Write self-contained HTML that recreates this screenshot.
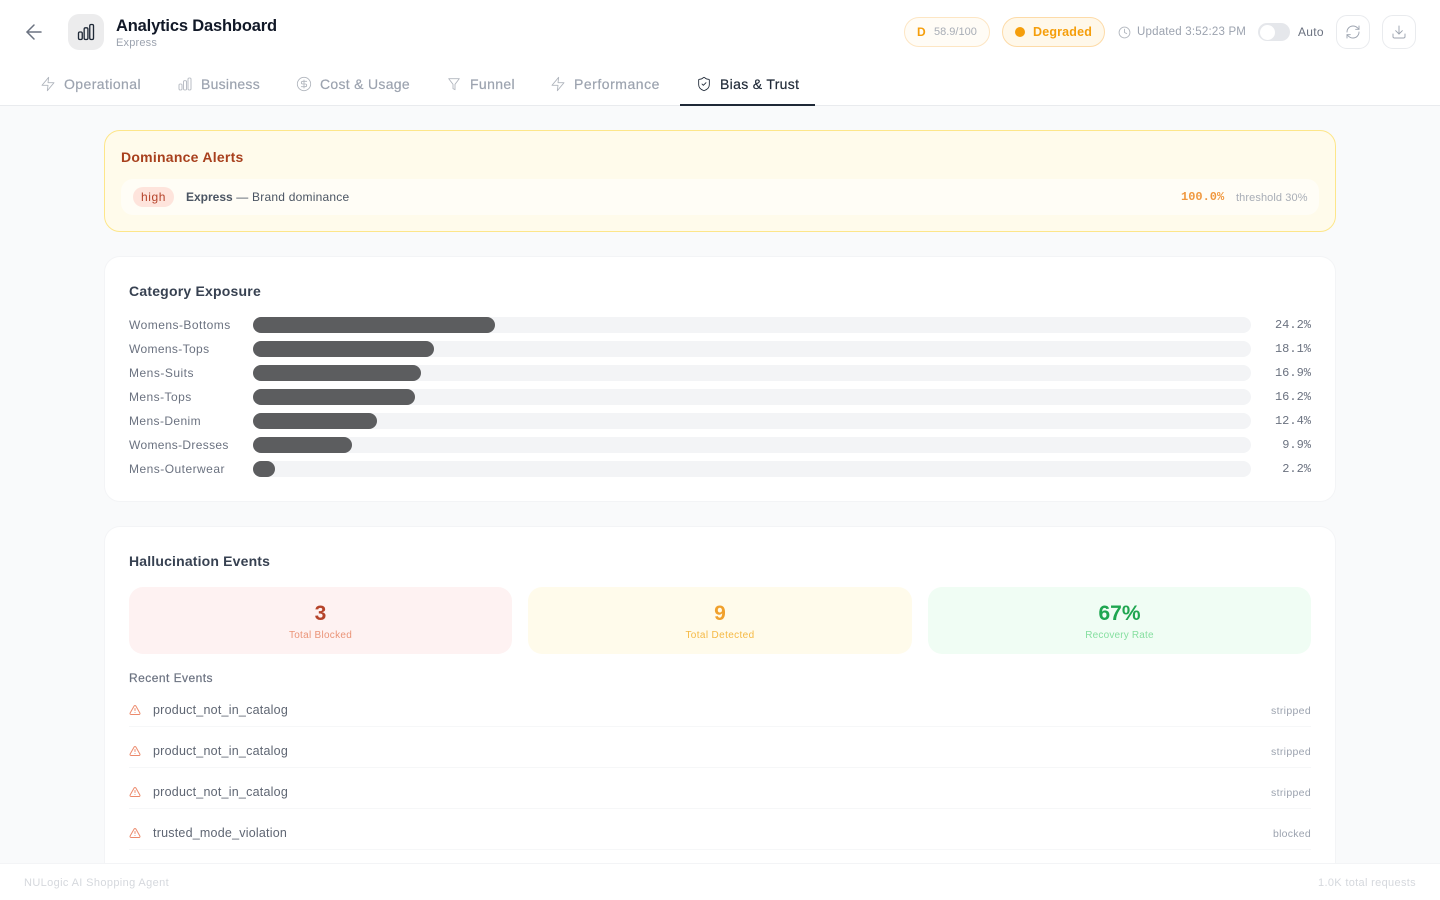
<!DOCTYPE html>
<html lang="en">
<head>
<meta charset="utf-8">
<title>Analytics Dashboard</title>
<style>
html,body{margin:0;padding:0;width:1440px;height:900px;overflow:hidden;background:#f9fafb;font-family:"Liberation Sans",sans-serif}
*{box-sizing:border-box}
.a{position:absolute}
.t{position:absolute;white-space:nowrap;line-height:20px;height:20px}
.m{-webkit-text-stroke:.2px currentColor}
.mono{font-family:"Liberation Mono",monospace}
svg{position:absolute;fill:none;stroke-linecap:round;stroke-linejoin:round}
.tab{font-size:14px;color:#9ca3af;top:74px}
.ti{width:16px;height:16px;top:76px;stroke:#b0b5bd;stroke-width:1.3}
.lab{font-size:12px;color:#6b7280;left:129px}
.track{position:absolute;left:253px;width:998px;height:16px;background:#f3f4f6;border-radius:8px}
.fill{position:absolute;left:0;top:0;height:16px;background:#5c5d5f;border-radius:8px}
.pct{font-size:12px;color:#6b7280;right:129px}
.stat{position:absolute;top:587px;height:67px;border-radius:14px}
.ev{font-size:12.5px;color:#5f6673;left:153px}
.st{font-size:10.5px;color:#9ca3af;right:129px}
.sep{position:absolute;left:129px;width:1182px;height:1px;background:#f6f7f8}
.warn{left:129px;width:12px;height:12px;stroke:#ec8a6c;stroke-width:2}
.ib{position:absolute;top:15px;width:34px;height:34px;background:#fff;border:1px solid #e9ebee;border-radius:11px}
</style>
</head>
<body>

<header class="a" style="left:0;top:0;width:1440px;height:106px;background:#fff;border-bottom:1px solid #e9ebee"></header>

<svg style="left:22px;top:20px;stroke:#6b7280;stroke-width:1.5" width="24" height="24" viewBox="0 0 24 24"><path d="m12 19-7-7 7-7"/><path d="M19 12H5"/></svg>

<div class="a" style="left:68px;top:14px;width:36px;height:36px;background:#ececed;border-radius:11px"></div>
<svg style="left:76px;top:22px;stroke:#1f2937;stroke-width:1.6" width="20" height="20" viewBox="0 0 24 24"><rect x="3" y="12" width="4.5" height="9" rx="1.6"/><rect x="9.8" y="7" width="4.5" height="14" rx="1.6"/><rect x="16.5" y="3" width="4.5" height="18" rx="1.6"/></svg>

<div class="t" style="left:116px;top:16px;font-size:16.5px;font-weight:700;color:#111827;letter-spacing:-.17px">Analytics Dashboard</div>
<div class="t" style="left:116px;top:33px;font-size:11px;color:#9ca3af;letter-spacing:.18px">Express</div>

<div class="a" style="left:904px;top:17px;width:86px;height:30px;border:1px solid #fde6c4;border-radius:15px;background:#fffcf6"></div>
<div class="t" style="left:917px;top:22px;font-size:12px;font-weight:700;color:#f59e0b">D</div>
<div class="t" style="left:934px;top:22px;font-size:11px;color:#a8adb6">58.9/100</div>

<div class="a" style="left:1002px;top:17px;width:103px;height:30px;border:1px solid #fddba8;border-radius:15px;background:#fff8ea"></div>
<div class="a" style="left:1015px;top:27px;width:10px;height:10px;border-radius:50%;background:#f59e0b"></div>
<div class="t" style="left:1033px;top:22px;font-size:12.5px;font-weight:700;color:#f59e0b;letter-spacing:.17px">Degraded</div>

<svg style="left:1117.5px;top:25.5px;stroke:#b4b9c1;stroke-width:1.7" width="13" height="13" viewBox="0 0 24 24"><circle cx="12" cy="12" r="10"/><polyline points="12 6 12 12 16 14"/></svg>
<div class="t" style="left:1137px;top:22px;font-size:11.5px;color:#9ca3af;letter-spacing:.2px">Updated 3:52:23 PM</div>

<div class="a" style="left:1258px;top:23px;width:32px;height:18px;border-radius:9px;background:#e5e7eb"></div>
<div class="a" style="left:1259.5px;top:24.5px;width:15px;height:15px;border-radius:50%;background:#fff"></div>
<div class="t" style="left:1298px;top:22px;font-size:12px;color:#6b7280;letter-spacing:.3px">Auto</div>

<div class="ib" style="left:1336px"></div>
<svg style="left:1345px;top:24px;stroke:#9ca3af;stroke-width:1.4" width="16" height="16" viewBox="0 0 24 24"><path d="M3 12a9 9 0 0 1 9-9 9.75 9.75 0 0 1 6.74 2.74L21 8"/><path d="M21 3v5h-5"/><path d="M21 12a9 9 0 0 1-9 9 9.75 9.75 0 0 1-6.74-2.74L3 16"/><path d="M8 16H3v5"/></svg>
<div class="ib" style="left:1382px"></div>
<svg style="left:1391px;top:24px;stroke:#9ca3af;stroke-width:1.4" width="16" height="16" viewBox="0 0 24 24"><path d="M21 15v4a2 2 0 0 1-2 2H5a2 2 0 0 1-2-2v-4"/><polyline points="7 10 12 15 17 10"/><line x1="12" y1="15" x2="12" y2="3"/></svg>

<svg class="ti" style="left:40px" viewBox="0 0 24 24"><polygon points="13 2 3 14 12 14 11 22 21 10 12 10 13 2"/></svg>
<div class="t tab m" style="left:64px;letter-spacing:.42px">Operational</div>
<svg class="ti" style="left:177px" viewBox="0 0 24 24"><rect x="3" y="12" width="4.5" height="9" rx="1.6"/><rect x="9.8" y="7" width="4.5" height="14" rx="1.6"/><rect x="16.5" y="3" width="4.5" height="18" rx="1.6"/></svg>
<div class="t tab m" style="left:201px;letter-spacing:.27px">Business</div>
<svg class="ti" style="left:296px" viewBox="0 0 24 24"><circle cx="12" cy="12" r="10"/><path d="M16 8h-6a2 2 0 1 0 0 4h4a2 2 0 1 1 0 4H8"/><path d="M12 18V6"/></svg>
<div class="t tab m" style="left:320px;letter-spacing:.3px">Cost &amp; Usage</div>
<svg class="ti" style="left:446px" viewBox="0 0 24 24"><polygon points="20 4 4 4 10.5 12.46 10.5 19 13.5 20.5 13.5 12.46 20 4"/></svg>
<div class="t tab m" style="left:470px;letter-spacing:.37px">Funnel</div>
<svg class="ti" style="left:550px" viewBox="0 0 24 24"><polygon points="13 2 3 14 12 14 11 22 21 10 12 10 13 2"/></svg>
<div class="t tab m" style="left:574px;letter-spacing:.53px">Performance</div>
<svg class="ti" style="left:696px;stroke:#1f2937" viewBox="0 0 24 24"><path d="M20 13c0 5-3.5 7.5-7.66 8.95a1 1 0 0 1-.67-.01C7.5 20.5 4 18 4 13V6a1 1 0 0 1 1-1c2 0 4.5-1.2 6.24-2.72a1.17 1.17 0 0 1 1.52 0C14.51 3.81 17 5 19 5a1 1 0 0 1 1 1z"/><path d="m9 12 2 2 4-4"/></svg>
<div class="t tab m" style="left:720px;color:#1f2937;letter-spacing:.32px">Bias &amp; Trust</div>
<div class="a" style="left:680px;top:104px;width:135px;height:2px;background:#1f2937"></div>

<section class="a" style="left:104px;top:130px;width:1232px;height:102px;background:#fffbeb;border:1px solid #fde68a;border-radius:16px"></section>
<div class="t" style="left:121px;top:147px;font-size:14px;font-weight:700;color:#a8401d;letter-spacing:.25px">Dominance Alerts</div>
<div class="a" style="left:121px;top:179px;width:1198px;height:36px;background:#fffdf6;border-radius:12px"></div>
<div class="a" style="left:133px;top:187px;width:41px;height:20px;background:#fee4dc;border-radius:10px"></div>
<div class="t" style="left:141px;top:187px;font-size:12px;color:#b5432a;letter-spacing:.58px">high</div>
<div class="t" style="left:186px;top:187px;font-size:12px;color:#4b5563;letter-spacing:.22px"><span style="font-weight:700;letter-spacing:0">Express</span> — Brand dominance</div>
<div class="t mono" style="left:1181px;top:187px;font-size:12px;font-weight:700;color:#f0983f">100.0%</div>
<div class="t" style="left:1236px;top:188px;font-size:11px;color:#a8adb6;letter-spacing:.1px">threshold 30%</div>

<section class="a" style="left:104px;top:256px;width:1232px;height:246px;background:#fff;border:1px solid #f3f4f6;border-radius:16px"></section>
<div class="t" style="left:129px;top:281px;font-size:14px;font-weight:700;color:#374151;letter-spacing:.21px">Category Exposure</div>

<div class="t lab" style="top:315px;letter-spacing:.47px">Womens-Bottoms</div>
<div class="track" style="top:317px"><div class="fill" style="width:242px"></div></div>
<div class="t pct mono" style="top:315px">24.2%</div>

<div class="t lab" style="top:339px;letter-spacing:.36px">Womens-Tops</div>
<div class="track" style="top:341px"><div class="fill" style="width:181px"></div></div>
<div class="t pct mono" style="top:339px">18.1%</div>

<div class="t lab" style="top:363px;letter-spacing:.5px">Mens-Suits</div>
<div class="track" style="top:365px"><div class="fill" style="width:168px"></div></div>
<div class="t pct mono" style="top:363px">16.9%</div>

<div class="t lab" style="top:387px;letter-spacing:.44px">Mens-Tops</div>
<div class="track" style="top:389px"><div class="fill" style="width:162px"></div></div>
<div class="t pct mono" style="top:387px">16.2%</div>

<div class="t lab" style="top:411px;letter-spacing:.4px">Mens-Denim</div>
<div class="track" style="top:413px"><div class="fill" style="width:124px"></div></div>
<div class="t pct mono" style="top:411px">12.4%</div>

<div class="t lab" style="top:435px;letter-spacing:.33px">Womens-Dresses</div>
<div class="track" style="top:437px"><div class="fill" style="width:99px"></div></div>
<div class="t pct mono" style="top:435px">9.9%</div>

<div class="t lab" style="top:459px;letter-spacing:.47px">Mens-Outerwear</div>
<div class="track" style="top:461px"><div class="fill" style="width:22px"></div></div>
<div class="t pct mono" style="top:459px">2.2%</div>

<section class="a" style="left:104px;top:526px;width:1232px;height:337px;background:#fff;border:1px solid #f3f4f6;border-bottom:0;border-radius:16px 16px 0 0"></section>
<div class="t" style="left:129px;top:551px;font-size:14px;font-weight:700;color:#374151;letter-spacing:.17px">Hallucination Events</div>

<div class="stat" style="left:129px;width:383px;background:#fef2f2"></div>
<div class="t" style="left:129px;width:383px;text-align:center;top:604px;font-size:21px;font-weight:700;color:#b5432a">3</div>
<div class="t" style="left:129px;width:383px;text-align:center;top:626px;font-size:10px;color:#ea9478;letter-spacing:.28px">Total Blocked</div>

<div class="stat" style="left:528px;width:384px;background:#fffbeb"></div>
<div class="t" style="left:528px;width:384px;text-align:center;top:604px;font-size:21px;font-weight:700;color:#f0a02c">9</div>
<div class="t" style="left:528px;width:384px;text-align:center;top:626px;font-size:10px;color:#f5b944;letter-spacing:.37px">Total Detected</div>

<div class="stat" style="left:928px;width:383px;background:#f0fdf4"></div>
<div class="t" style="left:928px;width:383px;text-align:center;top:604px;font-size:21px;font-weight:700;color:#1fa650">67%</div>
<div class="t" style="left:928px;width:383px;text-align:center;top:626px;font-size:10px;color:#86dfa0;letter-spacing:.18px">Recovery Rate</div>

<div class="t m" style="left:129px;top:668px;font-size:12px;color:#6b7280;letter-spacing:.46px">Recent Events</div>

<svg class="warn" style="top:704px" viewBox="0 0 24 24"><path d="m21.73 18-8-14a2 2 0 0 0-3.48 0l-8 14A2 2 0 0 0 4 21h16a2 2 0 0 0 1.73-3"/><path d="M12 9v4"/><path d="M12 17h.01"/></svg>
<div class="t ev" style="top:700px;letter-spacing:.23px">product_not_in_catalog</div>
<div class="t st" style="top:701px;letter-spacing:.33px">stripped</div>
<div class="sep" style="top:726px"></div>

<svg class="warn" style="top:745px" viewBox="0 0 24 24"><path d="m21.73 18-8-14a2 2 0 0 0-3.48 0l-8 14A2 2 0 0 0 4 21h16a2 2 0 0 0 1.73-3"/><path d="M12 9v4"/><path d="M12 17h.01"/></svg>
<div class="t ev" style="top:741px;letter-spacing:.23px">product_not_in_catalog</div>
<div class="t st" style="top:742px;letter-spacing:.33px">stripped</div>
<div class="sep" style="top:767px"></div>

<svg class="warn" style="top:786px" viewBox="0 0 24 24"><path d="m21.73 18-8-14a2 2 0 0 0-3.48 0l-8 14A2 2 0 0 0 4 21h16a2 2 0 0 0 1.73-3"/><path d="M12 9v4"/><path d="M12 17h.01"/></svg>
<div class="t ev" style="top:782px;letter-spacing:.23px">product_not_in_catalog</div>
<div class="t st" style="top:783px;letter-spacing:.33px">stripped</div>
<div class="sep" style="top:808px"></div>

<svg class="warn" style="top:827px" viewBox="0 0 24 24"><path d="m21.73 18-8-14a2 2 0 0 0-3.48 0l-8 14A2 2 0 0 0 4 21h16a2 2 0 0 0 1.73-3"/><path d="M12 9v4"/><path d="M12 17h.01"/></svg>
<div class="t ev" style="top:823px;letter-spacing:.22px">trusted_mode_violation</div>
<div class="t st" style="top:824px;letter-spacing:.26px">blocked</div>
<div class="sep" style="top:849px"></div>

<footer class="a" style="left:0;top:863px;width:1440px;height:37px;background:#fff;border-top:1px solid #f3f4f6"></footer>
<div class="t" style="left:24px;top:873px;font-size:11px;color:#d5d8dd;letter-spacing:.37px">NULogic AI Shopping Agent</div>
<div class="t" style="right:24px;top:873px;font-size:11px;color:#d5d8dd;letter-spacing:.33px">1.0K total requests</div>

</body>
</html>
